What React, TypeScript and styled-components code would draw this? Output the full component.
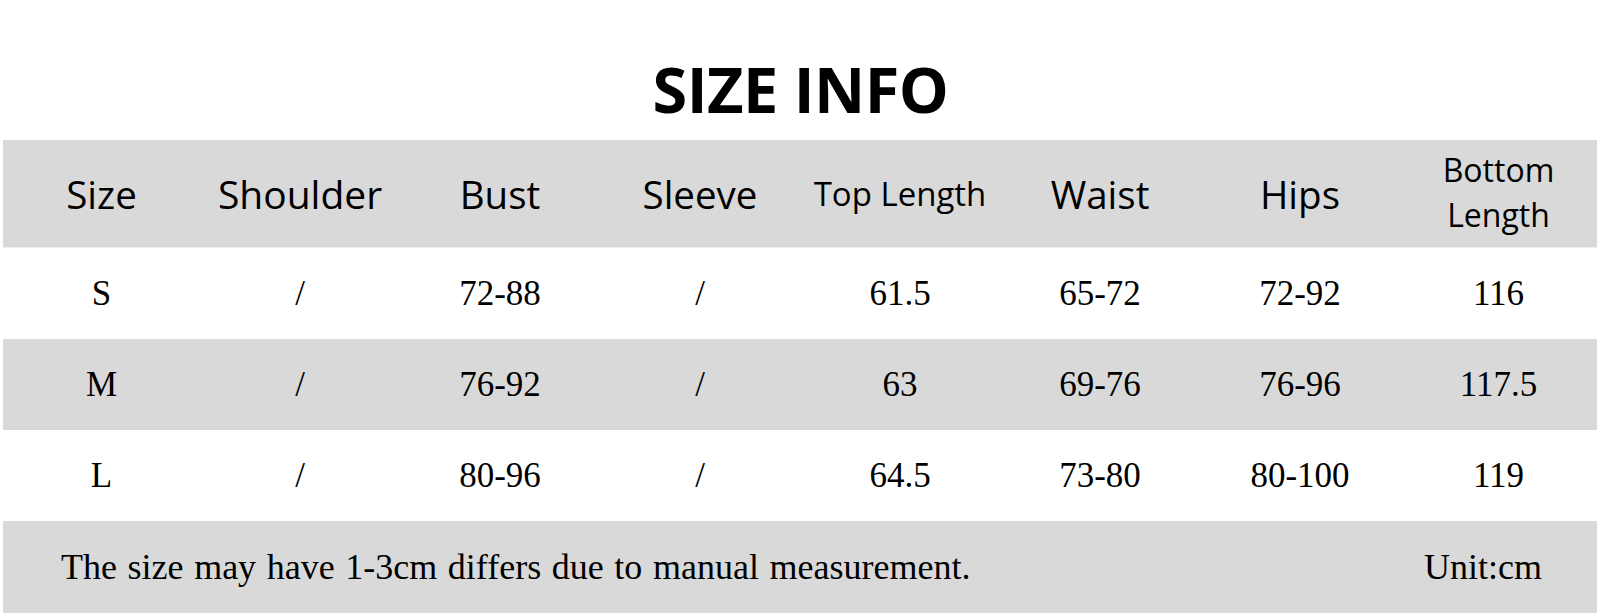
import React from "react";
import styled, { createGlobalStyle } from "styled-components";

const GlobalStyle = createGlobalStyle`
  html, body {
    margin: 0;
    padding: 0;
    background: #ffffff;
  }
  body {
    width: 1601px;
    height: 615px;
    overflow: hidden;
    font-family: "Liberation Serif", "Times New Roman", serif;
    color: #000;
  }
`;

const Page = styled.div`
  width: 1601px;
  display: flex;
  flex-direction: column;
`;

const Title = styled.h1`
  box-sizing: border-box;
  height: 140px;
  margin: 0;
  padding-top: 46px;
  text-align: center;
  font-family: "Open Sans", "Noto Sans", sans-serif;
  font-weight: 700;
  font-size: 63px;
  line-height: normal;
  letter-spacing: -0.5px;
  color: #000;
`;

const Table = styled.div`
  width: 1594px;
  margin-left: 3px;
  display: flex;
  flex-direction: column;
`;

const Row = styled.div<{ $shade?: boolean; $h: number }>`
  display: grid;
  grid-template-columns: 197px repeat(6, 200px) 197px;
  align-items: center;
  height: ${(p) => p.$h}px;
  background: ${(p) => (p.$shade ? "#d9d9d9" : "#ffffff")};
`;

const HeadCell = styled.div<{ $size?: number; $lh?: string; $shift?: number }>`
  text-align: center;
  font-family: "Open Sans", "Noto Sans", sans-serif;
  font-size: ${(p) => p.$size ?? 38.5}px;
  line-height: ${(p) => p.$lh ?? "normal"};
  margin-top: ${(p) => p.$shift ?? 0}px;
  color: #000;
`;

const Cell = styled.div`
  text-align: center;
  font-family: "Liberation Serif", "Times New Roman", serif;
  font-size: 35px;
  line-height: normal;
  color: #000;
`;

const Footer = styled.div`
  box-sizing: border-box;
  height: 92px;
  display: flex;
  align-items: center;
  justify-content: space-between;
  padding: 0 55px 0 58px;
  background: #d9d9d9;
  font-family: "Liberation Serif", "Times New Roman", serif;
  font-size: 36px;
  color: #000;
`;

const Note = styled.span`
  word-spacing: 1.6px;
`;

const Divider = styled.div`
  height: 1px;
  background: #f0f0f0;
`;

type Head = { label: React.ReactNode; size?: number; lh?: string; shift?: number };

const heads: Head[] = [
  { label: "Size" },
  { label: "Shoulder", size: 39 },
  { label: "Bust" },
  { label: "Sleeve" },
  { label: "Top Length", size: 33 },
  { label: "Waist" },
  { label: "Hips" },
  {
    label: (
      <>
        Bottom
        <br />
        Length
      </>
    ),
    size: 32,
    lh: "45px",
    shift: -4,
  },
];

const rows: string[][] = [
  ["S", "/", "72-88", "/", "61.5", "65-72", "72-92", "116"],
  ["M", "/", "76-92", "/", "63", "69-76", "76-96", "117.5"],
  ["L", "/", "80-96", "/", "64.5", "73-80", "80-100", "119"],
];

export default function App() {
  return (
    <>
      <GlobalStyle />
      <Page>
        <Title>SIZE INFO</Title>
        <Table>
          <Row $shade $h={107}>
            {heads.map((h, i) => (
              <HeadCell key={i} $size={h.size} $lh={h.lh} $shift={h.shift}>
                {h.label}
              </HeadCell>
            ))}
          </Row>
          <Divider />
          {rows.map((r, i) => (
            <Row key={r[0]} $shade={i === 1} $h={91}>
              {r.map((v, j) => (
                <Cell key={j}>{v}</Cell>
              ))}
            </Row>
          ))}
          <Footer>
            <Note>The size may have 1-3cm differs due to manual measurement.</Note>
            <span>Unit:cm</span>
          </Footer>
        </Table>
      </Page>
    </>
  );
}
